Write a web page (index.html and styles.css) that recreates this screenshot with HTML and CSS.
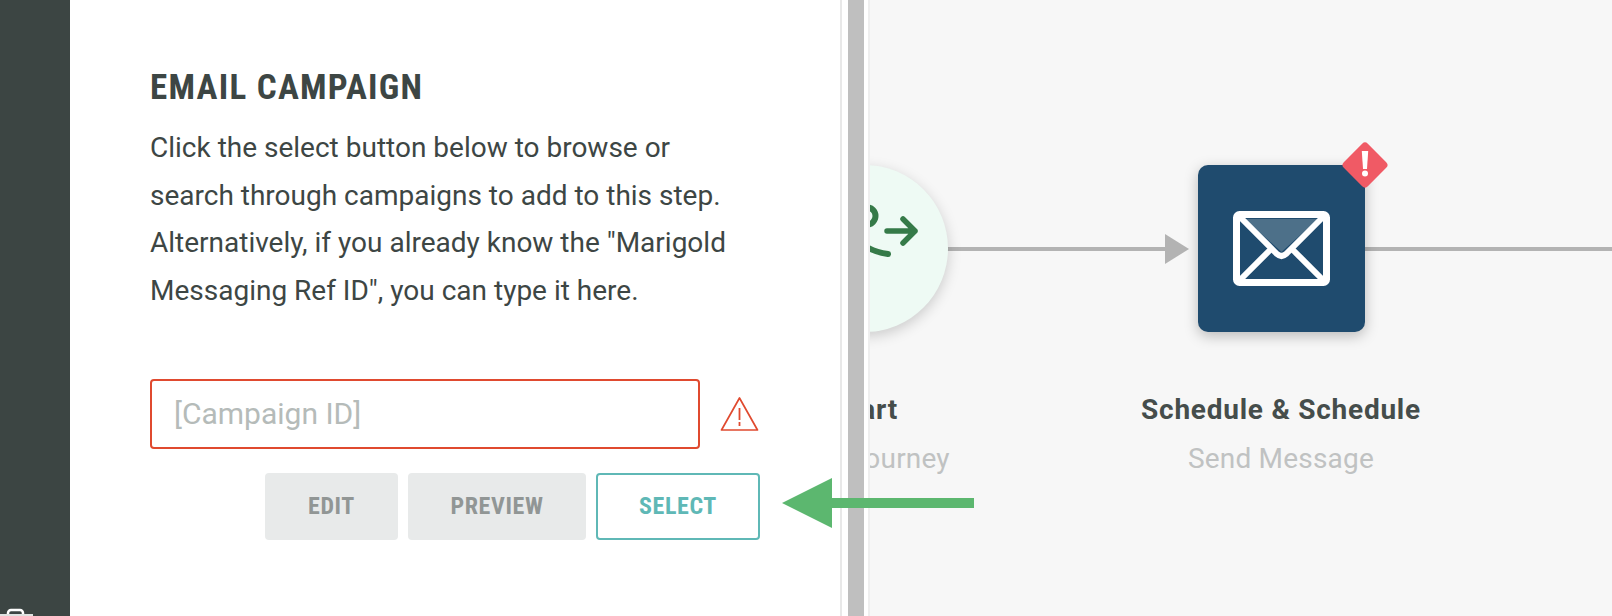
FILE: index.html
```html
<!DOCTYPE html>
<html lang="en">
<head>
    <meta charset="UTF-8">
    <title>Email Campaign</title>
    <link rel="stylesheet" href="styles.css">
</head>
<body>
    <div class="app">
        <div class="sidebar">
            <svg class="sidebar-icon" width="36" height="8" viewBox="0 0 36 8">
                <path d="M8 8V5a3 3 0 0 1 3-3h9a3 3 0 0 1 3 3v3" fill="none" stroke="#fff" stroke-width="2.5"/>
                <rect x="0" y="6" width="33" height="2" fill="#dfe2e1"/>
            </svg>
        </div>

        <div class="panel">
            <h1>EMAIL CAMPAIGN</h1>
            <p class="intro">Click the select button below to browse or search through campaigns to add to this step. Alternatively, if you already know the "Marigold Messaging Ref ID", you can type it here.</p>

            <div class="field-row">
                <input type="text" class="campaign-input" placeholder="[Campaign ID]">
                <svg class="warning-icon" width="39" height="36" viewBox="0 0 39 36">
                    <path d="M19.5 2 L37.5 34 H1.5 Z" fill="none" stroke="#e04a2f" stroke-width="1.7" stroke-linejoin="round"/>
                    <path d="M19.5 12 V30" stroke="#e04a2f" stroke-width="1.8" stroke-dasharray="12 2 4"/>
                </svg>
            </div>

            <div class="button-row">
                <button class="btn btn-edit">EDIT</button>
                <button class="btn btn-preview">PREVIEW</button>
                <button class="btn btn-select">SELECT</button>
            </div>
        </div>

        <div class="divider"><div class="divider-bar"></div></div>

        <div class="canvas">
            <div class="line line-one"></div>
            <div class="line line-two"></div>
            <div class="line-head"></div>

            <div class="start-node">
                <svg class="start-icon" width="110" height="70" viewBox="0 0 110 70">
                    <circle cx="34" cy="18" r="8.5" fill="none" stroke="#357a48" stroke-width="6"/>
                    <path d="M21 38 Q33 53 55 56" fill="none" stroke="#357a48" stroke-width="6" stroke-linecap="round"/>
                    <path d="M54 33 H82 M70 21 L82 33 L70 45" fill="none" stroke="#357a48" stroke-width="5.5" stroke-linecap="round" stroke-linejoin="round"/>
                </svg>
            </div>
            <div class="node-label label-start">
                <strong>Start</strong>
                <span>Start Journey</span>
            </div>

            <div class="message-node">
                <svg width="97" height="75" viewBox="0 0 97 75">
                    <path d="M12 8 H85 L48.5 41 Z" fill="#4d7089"/>
                    <rect x="3.5" y="3.5" width="90" height="68" rx="3" fill="none" stroke="#fff" stroke-width="7"/>
                    <path d="M6 5 L44 43 Q48.5 47 53 43 L91 5 M6 70 L37 39 M91 70 L60 39" fill="none" stroke="#fff" stroke-width="6"/>
                </svg>
                <svg class="alert-badge" width="48" height="48" viewBox="0 0 48 48">
                    <rect x="7" y="7" width="34" height="34" rx="4" fill="#f05a65" transform="rotate(45 24 24)"/>
                    <path d="M20.8 10 H27.2 L26 28 H22 Z" fill="#fff"/>
                    <circle cx="24" cy="32.5" r="3" fill="#fff"/>
                </svg>
            </div>
            <div class="node-label label-message">
                <strong>Schedule &amp; Schedule</strong>
                <span>Send Message</span>
            </div>
        </div>

        <svg class="callout-arrow" width="192" height="50" viewBox="0 0 192 50">
            <path d="M0 25 L50 0 V20 H192 V30 H50 V50 Z" fill="#5cb76f"/>
        </svg>
    </div>
</body>
</html>
```

FILE: styles.css
```css
* {
    box-sizing: border-box;
}

html, body {
    margin: 0;
    padding: 0;
    height: 616px;
    overflow: hidden;
}

body {
    font-family: Roboto, "Liberation Sans", sans-serif;
    color: #3d4644;
    background-color: #fff;
}

.app {
    display: flex;
    position: relative;
    height: 616px;
}

.sidebar {
    position: relative;
    width: 70px;
    flex: none;
    background-color: #3c4543;
}

.sidebar-icon {
    position: absolute;
    left: 0;
    bottom: 0;
}

.panel {
    width: 770px;
    flex: none;
    padding: 68px 0 0 80px;
    background-color: #fff;
}

h1 {
    margin: 0;
    font-size: 35px;
    line-height: 40px;
    font-weight: 700;
    font-stretch: condensed;
    letter-spacing: 1.25px;
    color: #3d4644;
}

.intro {
    width: 590px;
    margin: 16px 0 0;
    font-size: 28px;
    line-height: 47.7px;
    color: #3d4644;
}

.field-row {
    display: flex;
    align-items: center;
    gap: 20px;
    margin-top: 64px;
}

.campaign-input {
    width: 550px;
    height: 70px;
    padding: 0 22px;
    border: 2px solid #e04a2f;
    border-radius: 4px;
    font-family: inherit;
    font-size: 30px;
    background-color: #fff;
}

.campaign-input::placeholder {
    color: #b5bbb9;
    opacity: 1;
}

.button-row {
    display: flex;
    justify-content: flex-end;
    gap: 10px;
    width: 610px;
    margin-top: 24px;
}

.btn {
    height: 67px;
    border: none;
    border-radius: 4px;
    font-family: inherit;
    font-size: 24px;
    font-weight: 700;
    font-stretch: condensed;
    letter-spacing: 0.6px;
    background-color: #e8eaea;
    color: #919695;
}

.btn-edit {
    width: 133px;
}

.btn-preview {
    width: 178px;
}

.btn-select {
    width: 164px;
    border: 2px solid #5fb8b6;
    background-color: #fff;
    color: #5fb8b6;
}

.divider {
    width: 30px;
    flex: none;
    padding-left: 6px;
    border-left: 2px solid #e8e8e8;
    border-right: 2px solid #eeeeee;
    background-color: #fff;
}

.divider-bar {
    width: 16px;
    height: 100%;
    background-color: #bfbfbf;
}

/* free canvas, nodes sit at their own coordinates */
.canvas {
    position: relative;
    flex: 1;
    overflow: hidden;
    background-color: #f7f7f7;
}

.line {
    position: absolute;
    top: 247px;
    height: 4px;
    background-color: #b3b3b3;
}

.line-one {
    left: 77px;
    width: 220px;
}

.line-two {
    left: 495px;
    right: 0;
}

.line-head {
    position: absolute;
    left: 295px;
    top: 234px;
    width: 0;
    height: 0;
    border-top: 15px solid transparent;
    border-bottom: 15px solid transparent;
    border-left: 24px solid #b3b3b3;
}

.start-node {
    position: absolute;
    left: -89px;
    top: 165px;
    width: 167px;
    height: 167px;
    border-radius: 50%;
    background-color: #eefaf4;
    box-shadow: 0 4px 14px rgba(0, 0, 0, 0.18);
}

.start-icon {
    position: absolute;
    left: 52px;
    top: 33px;
}

.message-node {
    position: absolute;
    left: 328px;
    top: 165px;
    display: flex;
    align-items: center;
    justify-content: center;
    width: 167px;
    height: 167px;
    border-radius: 10px;
    background-color: #1f4b6e;
    box-shadow: 0 4px 14px rgba(0, 0, 0, 0.25);
}

.alert-badge {
    position: absolute;
    right: -24px;
    top: -24px;
}

.node-label {
    position: absolute;
    top: 393px;
    width: 400px;
    text-align: center;
}

.node-label strong {
    display: block;
    font-size: 28px;
    line-height: 34px;
    font-weight: 700;
    letter-spacing: 0.75px;
    color: #454d4b;
}

.node-label span {
    display: block;
    margin-top: 15px;
    font-size: 28px;
    line-height: 34px;
    letter-spacing: 0.2px;
    color: #c0c2c2;
}

.label-start {
    left: -205px;
}

.label-message {
    left: 211px;
}

.callout-arrow {
    position: absolute;
    left: 782px;
    top: 478px;
}
```
